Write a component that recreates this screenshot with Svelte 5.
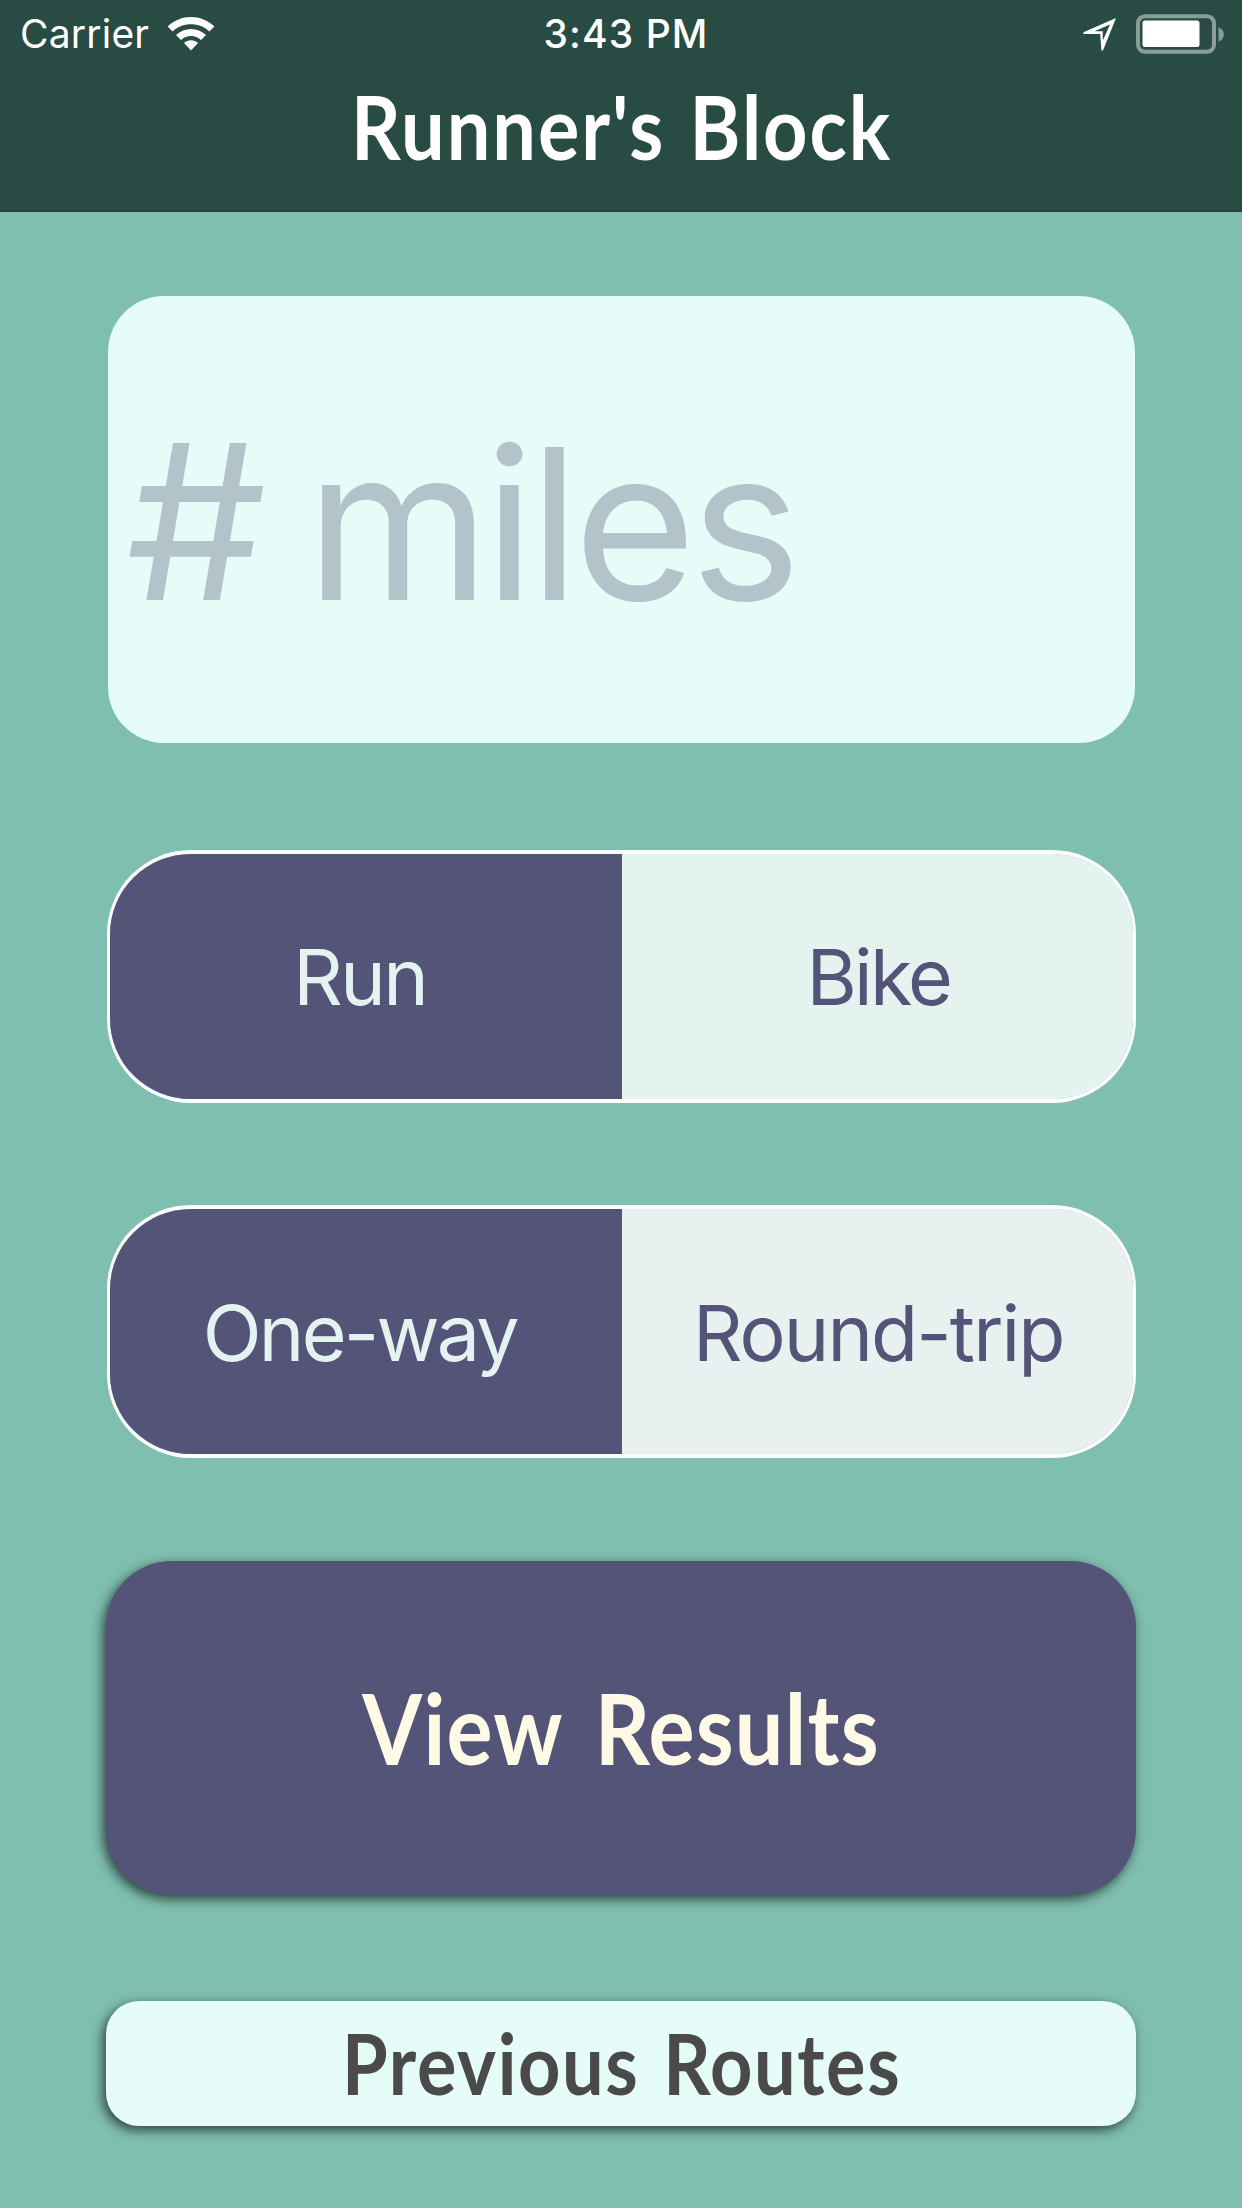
<script>
  let groups = $state([
    {
      name: 'Activity',
      kind: 'activity',
      selected: 0,
      options: [
        { label: 'Run', tracking: -2.5 },
        { label: 'Bike', tracking: -2.7 }
      ]
    },
    {
      name: 'Route type',
      kind: 'route',
      selected: 0,
      options: [
        { label: 'One-way', tracking: -2.7 },
        { label: 'Round-trip', tracking: -1.9 }
      ]
    }
  ]);
</script>

<div class="screen">
  <header>
    <div class="status">
      <div class="left">
        <span class="carrier">Carrier</span>
        <svg class="wifi" viewBox="0 0 48 35" aria-hidden="true">
          <path d="M0.6 9.6C13.5 -3.2 34.5 -3.2 47.4 9.6L42.4 14.6C32.3 4.9 15.7 4.9 5.6 14.6Z" />
          <path d="M9 18C17.3 9.9 30.7 9.9 39 18L34 23C28.5 17.6 19.5 17.6 14 23Z" />
          <path d="M17 26C20.8 22.4 27.2 22.4 31 26L24 33.4Z" />
        </svg>
      </div>
      <span class="time">3:43 PM</span>
      <div class="right">
        <svg class="location" viewBox="0 0 34 34" aria-hidden="true">
          <path
            fill-rule="evenodd"
            d="M33 1L0.5 15.2V17H17.2L18.4 33.5H20ZM27 7.5L19.8 23.5V14.2H11.5Z"
          />
        </svg>
        <svg class="battery" viewBox="0 0 90 40" aria-hidden="true">
          <rect class="shell" x="3" y="2.2" width="76" height="35.6" rx="7" />
          <rect class="charge" x="7.5" y="6.5" width="57" height="26.5" rx="2.5" />
          <path class="cap" d="M83.5 13.5C90.5 15 90.5 26 83.5 27.5Z" />
        </svg>
      </div>
    </div>
    <h1><span class="display">Runner's Block</span></h1>
  </header>

  <main>
    <div class="distance"><span class="placeholder"><span class="hash">#</span> miles</span></div>

    {#each groups as group}
      <div class="segmented {group.kind}" role="group" aria-label={group.name}>
        {#each group.options as option, i}
          <button
            class="option"
            class:active={group.selected === i}
            onclick={() => (group.selected = i)}
          >
            <span style="letter-spacing: {option.tracking}px">{option.label}</span>
          </button>
        {/each}
      </div>
    {/each}

    <button class="action primary"><span class="display">View Results</span></button>
    <button class="action secondary"><span class="display">Previous Routes</span></button>
  </main>
</div>

<style>
  :global(body) {
    background: #7fbfb0;
  }

  .screen {
    display: flex;
    flex-direction: column;
    box-sizing: border-box;
    width: 1242px;
    height: 2208px;
    overflow: hidden;
    background: #7fbfb0;
    font-family: Inter, "Liberation Sans", sans-serif;
  }

  button {
    margin: 0;
    padding: 0;
    border: 0;
    font: inherit;
    color: inherit;
  }

  header {
    box-sizing: border-box;
    height: 212px;
    background: #284b43;
    border-bottom: 2px solid #24423b;
    color: #fff;
  }

  .status {
    display: grid;
    grid-template-columns: 1fr auto 1fr;
    align-items: center;
    height: 68px;
    padding: 0 17px 0 20px;
    font-size: 39px;
    line-height: 68px;
  }

  .left,
  .right {
    display: flex;
    align-items: center;
  }

  .left {
    gap: 18px;
  }

  .right {
    justify-content: flex-end;
    gap: 18px;
  }

  .carrier {
    letter-spacing: 0.2px;
  }

  .time {
    padding-left: 7px;
    font-weight: 500;
    letter-spacing: 1.1px;
  }

  .wifi {
    width: 48px;
    height: 35px;
    fill: #fff;
  }

  .location {
    width: 34px;
    height: 34px;
    fill: #fff;
  }

  .battery {
    width: 90px;
    height: 40px;
  }

  .shell {
    fill: none;
    stroke: #8a9e99;
    stroke-width: 4;
  }

  .charge {
    fill: #fff;
  }

  .cap {
    fill: #8a9e99;
  }

  .display {
    display: inline-block;
    transform: scaleX(0.88);
    font-family: Lato, "Liberation Sans", sans-serif;
    font-weight: 700;
    white-space: nowrap;
  }

  h1 {
    margin: 0;
    padding: 1px 0 0 1px;
    font-size: 88px;
    line-height: 115px;
    letter-spacing: 2.2px;
    word-spacing: 4px;
    text-align: center;
  }

  main {
    display: flex;
    flex-direction: column;
    padding: 84px 106px 0;
  }

  .distance {
    display: flex;
    align-items: center;
    box-sizing: border-box;
    height: 447px;
    margin: 0 1px 107px 2px;
    padding: 9px 0 0 18px;
    border-radius: 56px;
    background: #e5fcf8;
    color: #b2c4c9;
    font-size: 210px;
    line-height: 254px;
    letter-spacing: -6px;
    white-space: nowrap;
  }

  .hash {
    display: inline-block;
    transform: scale(1.06, 1.03);
    transform-origin: 0 80%;
  }

  .segmented {
    display: grid;
    grid-template-columns: 1fr 1fr;
    box-sizing: border-box;
    height: 253px;
    margin: 0 0 102px 1px;
    border: solid #fcfdfd;
    border-width: 4px 3px;
    border-radius: 84px;
    overflow: hidden;
    color: #545378;
    font-size: 77px;
  }

  .option {
    padding-left: 2px;
    background: #e4f3f0;
  }

  .option:first-child {
    padding-left: 0;
    padding-right: 12px;
  }

  .option.active {
    background: #545378;
    color: #e4f3f0;
  }

  .route .option {
    padding-top: 3px;
  }

  .route .option:not(.active) {
    background: #e8f1f0;
  }

  .action {
    line-height: 1.2;
    box-shadow: -3px 4px 12px rgba(0, 0, 0, 0.65);
  }

  .primary {
    height: 334px;
    margin-top: 1px;
    padding: 2px 0 0 1px;
    border-radius: 66px;
    background: #545378;
    color: #fffae6;
    font-size: 98px;
    letter-spacing: 1.4px;
    word-spacing: 12px;
  }

  .secondary {
    height: 125px;
    margin-top: 106px;
    padding: 2px 0 0 2px;
    border-radius: 33px;
    background: #e5fcf8;
    color: #4a4a4a;
    font-size: 84px;
    letter-spacing: 1.8px;
    word-spacing: 5px;
  }
</style>
